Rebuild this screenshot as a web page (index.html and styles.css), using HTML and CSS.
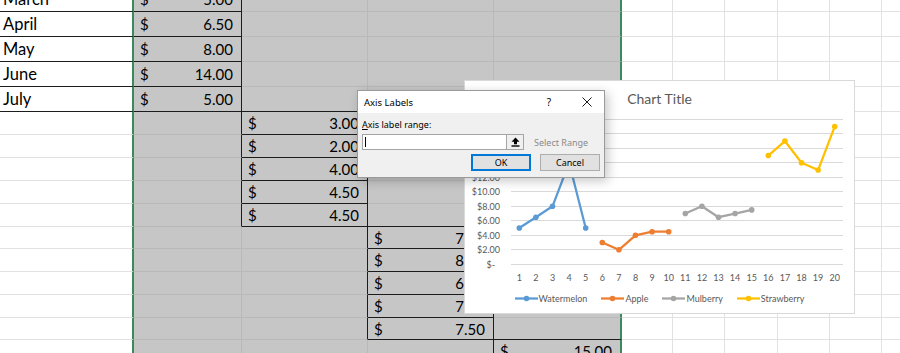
FILE: index.html
```html
<!DOCTYPE html>
<html lang="en">
<head>
<meta charset="utf-8">
<title>Axis Labels</title>
<link rel="stylesheet" href="styles.css">
</head>
<body>
<div class="sheet">
  <!-- row 0 -->
  <div class="cell a bb">March</div><div class="cell s bb br acct"><span>$</span><span>5.00</span></div><div class="cell s"></div><div class="cell s"></div><div class="cell s e"></div><div class="cell"></div><div class="cell"></div><div class="cell"></div><div class="cell"></div><div class="cell"></div><div class="cell"></div>
  <!-- row 1 -->
  <div class="cell a bb">April</div><div class="cell s bb br acct"><span>$</span><span>6.50</span></div><div class="cell s"></div><div class="cell s"></div><div class="cell s e"></div><div class="cell"></div><div class="cell"></div><div class="cell"></div><div class="cell"></div><div class="cell"></div><div class="cell"></div>
  <!-- row 2 -->
  <div class="cell a bb">May</div><div class="cell s bb br acct"><span>$</span><span>8.00</span></div><div class="cell s"></div><div class="cell s"></div><div class="cell s e"></div><div class="cell"></div><div class="cell"></div><div class="cell"></div><div class="cell"></div><div class="cell"></div><div class="cell"></div>
  <!-- row 3 -->
  <div class="cell a bb">June</div><div class="cell s bb br acct"><span>$</span><span>14.00</span></div><div class="cell s"></div><div class="cell s"></div><div class="cell s e"></div><div class="cell"></div><div class="cell"></div><div class="cell"></div><div class="cell"></div><div class="cell"></div><div class="cell"></div>
  <!-- row 4 -->
  <div class="cell a bb">July</div><div class="cell s bb br acct"><span>$</span><span>5.00</span></div><div class="cell s bb"></div><div class="cell s"></div><div class="cell s e"></div><div class="cell"></div><div class="cell"></div><div class="cell"></div><div class="cell"></div><div class="cell"></div><div class="cell"></div>
  <!-- row 5 -->
  <div class="cell a"></div><div class="cell s br"></div><div class="cell s bb br acct"><span>$</span><span>3.00</span></div><div class="cell s"></div><div class="cell s e"></div><div class="cell"></div><div class="cell"></div><div class="cell"></div><div class="cell"></div><div class="cell"></div><div class="cell"></div>
  <!-- row 6 -->
  <div class="cell a"></div><div class="cell s br"></div><div class="cell s bb br acct"><span>$</span><span>2.00</span></div><div class="cell s"></div><div class="cell s e"></div><div class="cell"></div><div class="cell"></div><div class="cell"></div><div class="cell"></div><div class="cell"></div><div class="cell"></div>
  <!-- row 7 -->
  <div class="cell a"></div><div class="cell s br"></div><div class="cell s bb br acct"><span>$</span><span>4.00</span></div><div class="cell s"></div><div class="cell s e"></div><div class="cell"></div><div class="cell"></div><div class="cell"></div><div class="cell"></div><div class="cell"></div><div class="cell"></div>
  <!-- row 8 -->
  <div class="cell a"></div><div class="cell s br"></div><div class="cell s bb br acct"><span>$</span><span>4.50</span></div><div class="cell s"></div><div class="cell s e"></div><div class="cell"></div><div class="cell"></div><div class="cell"></div><div class="cell"></div><div class="cell"></div><div class="cell"></div>
  <!-- row 9 -->
  <div class="cell a"></div><div class="cell s br"></div><div class="cell s bb br acct"><span>$</span><span>4.50</span></div><div class="cell s bb"></div><div class="cell s e"></div><div class="cell"></div><div class="cell"></div><div class="cell"></div><div class="cell"></div><div class="cell"></div><div class="cell"></div>
  <!-- row 10 -->
  <div class="cell a"></div><div class="cell s"></div><div class="cell s br"></div><div class="cell s bb br acct"><span>$</span><span>7.00</span></div><div class="cell s e"></div><div class="cell"></div><div class="cell"></div><div class="cell"></div><div class="cell"></div><div class="cell"></div><div class="cell"></div>
  <!-- row 11 -->
  <div class="cell a"></div><div class="cell s"></div><div class="cell s br"></div><div class="cell s bb br acct"><span>$</span><span>8.00</span></div><div class="cell s e"></div><div class="cell"></div><div class="cell"></div><div class="cell"></div><div class="cell"></div><div class="cell"></div><div class="cell"></div>
  <!-- row 12 -->
  <div class="cell a"></div><div class="cell s"></div><div class="cell s br"></div><div class="cell s bb br acct"><span>$</span><span>6.50</span></div><div class="cell s e"></div><div class="cell"></div><div class="cell"></div><div class="cell"></div><div class="cell"></div><div class="cell"></div><div class="cell"></div>
  <!-- row 13 -->
  <div class="cell a"></div><div class="cell s"></div><div class="cell s br"></div><div class="cell s bb br acct"><span>$</span><span>7.00</span></div><div class="cell s e"></div><div class="cell"></div><div class="cell"></div><div class="cell"></div><div class="cell"></div><div class="cell"></div><div class="cell"></div>
  <!-- row 14 -->
  <div class="cell a"></div><div class="cell s"></div><div class="cell s br"></div><div class="cell s bb br acct"><span>$</span><span>7.50</span></div><div class="cell s e bb"></div><div class="cell"></div><div class="cell"></div><div class="cell"></div><div class="cell"></div><div class="cell"></div><div class="cell"></div>
  <!-- row 15 -->
  <div class="cell a"></div><div class="cell s"></div><div class="cell s"></div><div class="cell s br"></div><div class="cell s e bb acct"><span>$</span><span>15.00</span></div><div class="cell"></div><div class="cell"></div><div class="cell"></div><div class="cell"></div><div class="cell"></div><div class="cell"></div>
</div>

<div class="chart">
  <div class="chart-title">Chart Title</div>
  <svg class="plot" width="389" height="170" viewBox="1 36 389 170">
    <g class="grid">
      <line x1="47" x2="379" y1="39.5" y2="39.5"/>
      <line x1="47" x2="379" y1="53.5" y2="53.5"/>
      <line x1="47" x2="379" y1="68.5" y2="68.5"/>
      <line x1="47" x2="379" y1="82.5" y2="82.5"/>
      <line x1="47" x2="379" y1="97.5" y2="97.5"/>
      <line x1="47" x2="379" y1="111.5" y2="111.5"/>
      <line x1="47" x2="379" y1="126.5" y2="126.5"/>
      <line x1="47" x2="379" y1="140.5" y2="140.5"/>
      <line x1="47" x2="379" y1="155.5" y2="155.5"/>
      <line x1="47" x2="379" y1="169.5" y2="169.5"/>
      <line x1="47" x2="379" y1="184.5" y2="184.5"/>
    </g>
    <g class="ylab">
      <text x="36" y="39.5">$20.00</text>
      <text x="36" y="53.5">$18.00</text>
      <text x="36" y="68.5">$16.00</text>
      <text x="36" y="82.5">$14.00</text>
      <text x="36" y="97.5">$12.00</text>
      <text x="36" y="111.5">$10.00</text>
      <text x="36" y="126.5">$8.00</text>
      <text x="36" y="140.5">$6.00</text>
      <text x="36" y="155.5">$4.00</text>
      <text x="36" y="169.5">$2.00</text>
      <text x="31" y="184.5">$-</text>
    </g>
    <g class="xlab">
      <text x="55.3" y="197">1</text><text x="71.9" y="197">2</text><text x="88.5" y="197">3</text><text x="105.1" y="197">4</text><text x="121.7" y="197">5</text>
      <text x="138.3" y="197">6</text><text x="154.9" y="197">7</text><text x="171.5" y="197">8</text><text x="188.1" y="197">9</text><text x="204.7" y="197">10</text>
      <text x="221.3" y="197">11</text><text x="237.9" y="197">12</text><text x="254.5" y="197">13</text><text x="271.1" y="197">14</text><text x="287.7" y="197">15</text>
      <text x="304.3" y="197">16</text><text x="320.9" y="197">17</text><text x="337.5" y="197">18</text><text x="354.1" y="197">19</text><text x="370.7" y="197">20</text>
    </g>
    <g class="series s-water">
      <polyline points="55.3,148.05 71.9,137.2 88.5,126.3 105.1,82.8 121.7,148.05"/>
      <circle cx="55.3" cy="148.05" r="2.8"/><circle cx="71.9" cy="137.2" r="2.8"/><circle cx="88.5" cy="126.3" r="2.8"/><circle cx="105.1" cy="82.8" r="2.8"/><circle cx="121.7" cy="148.05" r="2.8"/>
    </g>
    <g class="series s-apple">
      <polyline points="138.3,162.55 154.9,169.8 171.5,155.3 188.1,151.7 204.7,151.7"/>
      <circle cx="138.3" cy="162.55" r="2.8"/><circle cx="154.9" cy="169.8" r="2.8"/><circle cx="171.5" cy="155.3" r="2.8"/><circle cx="188.1" cy="151.7" r="2.8"/><circle cx="204.7" cy="151.7" r="2.8"/>
    </g>
    <g class="series s-mul">
      <polyline points="221.3,133.55 237.9,126.3 254.5,137.2 271.1,133.55 287.7,129.9"/>
      <circle cx="221.3" cy="133.55" r="2.8"/><circle cx="237.9" cy="126.3" r="2.8"/><circle cx="254.5" cy="137.2" r="2.8"/><circle cx="271.1" cy="133.55" r="2.8"/><circle cx="287.7" cy="129.9" r="2.8"/>
    </g>
    <g class="series s-straw">
      <polyline points="304.3,75.55 320.9,61.05 337.5,82.8 354.1,90.05 370.7,46.55"/>
      <circle cx="304.3" cy="75.55" r="2.8"/><circle cx="320.9" cy="61.05" r="2.8"/><circle cx="337.5" cy="82.8" r="2.8"/><circle cx="354.1" cy="90.05" r="2.8"/><circle cx="370.7" cy="46.55" r="2.8"/>
    </g>
  </svg>
  <div class="legend">
    <div class="lg"><svg class="lg-key s-water" width="23" height="7" viewBox="0 0 23 7"><line x1="0" x2="23" y1="3.5" y2="3.5"/><circle cx="11.5" cy="3.5" r="2.8"/></svg><span>Watermelon</span></div>
    <div class="lg"><svg class="lg-key s-apple" width="23" height="7" viewBox="0 0 23 7"><line x1="0" x2="23" y1="3.5" y2="3.5"/><circle cx="11.5" cy="3.5" r="2.8"/></svg><span>Apple</span></div>
    <div class="lg"><svg class="lg-key s-mul" width="23" height="7" viewBox="0 0 23 7"><line x1="0" x2="23" y1="3.5" y2="3.5"/><circle cx="11.5" cy="3.5" r="2.8"/></svg><span>Mulberry</span></div>
    <div class="lg"><svg class="lg-key s-straw" width="23" height="7" viewBox="0 0 23 7"><line x1="0" x2="23" y1="3.5" y2="3.5"/><circle cx="11.5" cy="3.5" r="2.8"/></svg><span>Strawberry</span></div>
  </div>
</div>

<div class="dialog">
  <div class="dlg-title">
    <span class="dlg-name">Axis Labels</span>
    <span class="dlg-ctrls">
      <span class="help">?</span>
      <span class="close"><svg width="10" height="10" viewBox="0 0 10 10"><path d="M0.5 0.5 L9.5 9.5 M9.5 0.5 L0.5 9.5"/></svg></span>
    </span>
  </div>
  <div class="dlg-body">
    <div class="dlg-label"><span class="ul">A</span>xis label range:</div>
    <div class="dlg-row">
      <div class="dlg-input"><span class="caret"></span></div>
      <div class="collapse"><svg width="9" height="10" viewBox="0 0 9 10"><path d="M4.5 0.5 L8.5 4.8 L6 4.8 L6 7.2 L3 7.2 L3 4.8 L0.5 4.8 Z"/><rect x="0.5" y="8.3" width="8" height="1.4"/></svg></div>
      <span class="sel-range">Select Range</span>
    </div>
    <div class="dlg-buttons">
      <button class="btn btn-ok">OK</button>
      <button class="btn">Cancel</button>
    </div>
  </div>
</div>
</body>
</html>
```

FILE: styles.css
```css
* { box-sizing: border-box; }
html, body { margin: 0; padding: 0; width: 900px; height: 353px; overflow: hidden; background: #fff; }
body { position: relative; font-family: Lato, "Liberation Sans", sans-serif; }

.sheet {
  display: grid;
  grid-template-columns: 134px 108px 126px 126px 128px 51px 52px 53px 52px 52px 52px;
  grid-template-rows: repeat(5, 25px) repeat(5, 23px) 22px 23px 23px 23px 22px 23px;
  margin-top: -13px;
  font-size: 15px;
  color: #000;
}
.cell {
  border-right: 1px solid #e1e1e1;
  border-bottom: 1px solid #e1e1e1;
  display: flex;
  align-items: center;
  line-height: 18px;
  white-space: nowrap;
  overflow: hidden;
}
.s { background: #c6c6c6; border-right-color: #b9b9b9; border-bottom-color: #b9b9b9; }
.a { border-right: 2px solid #3a8a5c; padding-left: 3px; font-size: 16.5px; }
.e { border-right: 2px solid #3a8a5c; }
.bb { border-bottom-color: #1c1c1c; }
.br { border-right-color: #1c1c1c; }
.acct { justify-content: space-between; padding: 0 8px 0 6px; }

/* chart */
.chart {
  position: absolute;
  left: 464px; top: 80px;
  width: 391px; height: 234px;
  background: #fff;
  border: 1px solid #d9d9d9;
  display: flex;
  flex-direction: column;
}
.chart-title { height: 35px; line-height: 35px; text-align: center; font-size: 14px; color: #595959; }
.plot { display: block; }
.grid line { stroke: #d9d9d9; stroke-width: 1; }
.ylab text { font-family: Lato, sans-serif; font-size: 9px; fill: #595959; text-anchor: end; dominant-baseline: central; }
.xlab text { font-family: Lato, sans-serif; font-size: 9px; fill: #595959; text-anchor: middle; dominant-baseline: central; }
.series polyline { fill: none; stroke-width: 2.25; stroke-linejoin: round; stroke-linecap: round; }
.lg-key line { stroke-width: 2.25; }
.s-water polyline, .s-water line { stroke: #5b9bd5; }
.s-water circle { fill: #5b9bd5; }
.s-apple polyline, .s-apple line { stroke: #ed7d31; }
.s-apple circle { fill: #ed7d31; }
.s-mul polyline, .s-mul line { stroke: #a5a5a5; }
.s-mul circle { fill: #a5a5a5; }
.s-straw polyline, .s-straw line { stroke: #ffc000; }
.s-straw circle { fill: #ffc000; }
.legend { display: flex; justify-content: center; align-items: center; gap: 14px; height: 24px; font-size: 9px; color: #595959; }
.lg { display: flex; align-items: center; gap: 1px; }
.lg-key { display: block; }

/* dialog */
.dialog {
  position: absolute;
  left: 357px; top: 90px;
  width: 248px; height: 88px;
  background: #f0f0f0;
  border: 1px solid #9a9a9a;
  box-shadow: 3px 3px 10px rgba(0, 0, 0, 0.22);
  font-family: "Noto Sans", "Liberation Sans", sans-serif;
  font-size: 9px;
  color: #000;
  display: flex;
  flex-direction: column;
}
.dlg-title { height: 22px; background: #fff; display: flex; align-items: center; justify-content: space-between; padding-left: 6px; }
.dlg-name { font-size: 9.5px; }
.dlg-ctrls { display: flex; align-items: center; gap: 6px; }
.help { width: 30px; text-align: center; font-size: 10px; }
.close { width: 34px; display: flex; justify-content: center; align-items: center; }
.close svg { display: block; }
.close path { stroke: #1a1a1a; stroke-width: 1; fill: none; }
.dlg-body { flex: 1; display: flex; flex-direction: column; padding: 5px 4px 6px 4px; }
.dlg-label { height: 13px; line-height: 13px; }
.ul { text-decoration: underline; }
.dlg-row { display: flex; align-items: center; height: 16px; margin-top: 3px; }
.dlg-input { width: 145px; height: 16px; background: #fff; border: 1px solid #a5a5a5; display: flex; align-items: center; padding-left: 2px; }
.caret { width: 1px; height: 10px; background: #000; }
.collapse { width: 17px; height: 16px; border: 1px solid #a5a5a5; border-left: none; background: #f0f0f0; display: flex; justify-content: center; align-items: center; }
.collapse svg { display: block; fill: #000; }
.sel-range { margin-left: 10px; color: #8a8a8a; }
.dlg-buttons { display: flex; justify-content: flex-end; gap: 9px; margin-top: 4px; }
.btn { width: 60px; height: 17px; padding: 0; background: #e1e1e1; border: 1px solid #adadad; font-family: "Noto Sans", "Liberation Sans", sans-serif; font-size: 9px; color: #000; line-height: 14px; }
.btn-ok { border: 2px solid #0078d7; }
```
